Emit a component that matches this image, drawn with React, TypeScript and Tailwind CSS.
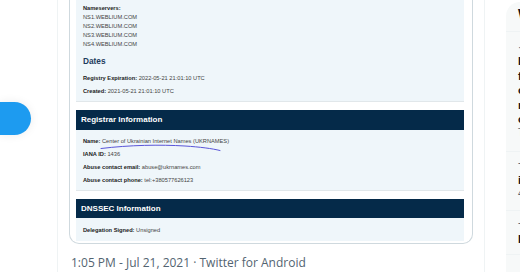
import React from 'react';

const Row: React.FC<{ label: string; value: string }> = ({ label, value }) => (
	<div className="leading-[13px]">
		<span className="font-bold text-[#1b1b1b]">{label}</span> <span className="text-[#444]">{value}</span>
	</div>
);

const Header: React.FC<{ title: string; h: string }> = ({ title, h }) => (
	<div className={`${h} bg-[#052a49] flex items-center pl-[5px] text-white font-bold text-[8px]`}>{title}</div>
);

const WhoisShot: React.FC = () => {
	return (
		<div className="relative font-['Liberation_Sans',Arial,sans-serif] text-[5.7px]">
			<div className="bg-[#eff6fa] border-b border-[#e1e7ea] pt-[3.5px] pb-[6px] pl-[7px] h-[102px]">
				<div className="leading-[9px]">
					<div className="font-bold text-[#1b1b1b]">Nameservers:</div>
					<div className="text-[#444]">NS1.WEBLIUM.COM</div>
					<div className="text-[#444]">NS2.WEBLIUM.COM</div>
					<div className="text-[#444]">NS3.WEBLIUM.COM</div>
					<div className="text-[#444]">NS4.WEBLIUM.COM</div>
				</div>
				<div className="mt-[6.5px] leading-[12px] text-[8.3px] font-bold text-[#1d3b5c]">Dates</div>
				<div className="mt-[4.5px]">
					<Row label="Registry Expiration:" value="2022-05-21 21:01:10 UTC" />
				</div>
				<Row label="Created:" value="2021-05-21 21:01:10 UTC" />
			</div>
			<div className="h-[8px]" />
			<Header title="Registrar Information" h="h-[20px]" />
			<div className="bg-[#eff6fa] border-b border-[#e1e7ea] pt-[4.5px] pl-[7px] h-[61px]">
				<Row label="Name:" value="Center of Ukrainian Internet Names (UKRNAMES)" />
				<Row label="IANA ID:" value="1436" />
				<Row label="Abuse contact email:" value="abuse@ukrnames.com" />
				<Row label="Abuse contact phone:" value="tel:+380577626123" />
			</div>
			<div className="h-[8px]" />
			<Header title="DNSSEC Information" h="h-[19px]" />
			<div className="bg-[#eff6fa] pt-[5.5px] pl-[7px] h-[23px]">
				<Row label="Delegation Signed:" value="Unsigned" />
			</div>
			<svg className="absolute left-[24px] top-[143px]" width="122" height="10" viewBox="0 0 122 10">
				<path d="M1 5.5 C 30 2, 60 1.5, 85 3 C 100 4, 112 5.5, 120 7.5" fill="none" stroke="#5a55d8" strokeWidth="1" strokeLinecap="round" />
			</svg>
		</div>
	);
};

const App: React.FC = () => {
	return (
		<div className="w-[520px] h-[272px] overflow-hidden bg-white flex">
			<div className="w-[58px] shrink-0 border-r border-[#eff3f4]">
				<div className="mt-[102px] h-[33px] w-[31px] rounded-r-full bg-[#1d9bf0] shadow-[0_0_10px_rgba(0,0,0,0.08)]" />
			</div>
			<div className="w-[427px] shrink-0 border-r border-[#eff3f4]">
				<div className="ml-[11px] w-[404px] border border-t-0 border-[#cfd9de] rounded-b-[10px] pl-[6px] pr-[8px] pb-[2px]">
					<WhoisShot />
				</div>
				<div className="ml-[13px] mt-[11px] leading-[16px] text-[12px] text-[#536471] font-['Open_Sans',sans-serif] whitespace-nowrap">
					1:05 PM - Jul 21, 2021 · Twitter for Android
				</div>
			</div>
			<div className="ml-[21px] mt-[2px] flex-1 bg-[#f7f9f9] rounded-tl-2xl overflow-hidden font-['Liberation_Sans',Arial,sans-serif] whitespace-nowrap">
				<div className="h-[30px] border-b border-[#eff3f4] pl-[12px] pt-[4px] leading-[16px] text-[14px] font-bold text-[#0f1419]">What's happening</div>
				<div className="h-[120px] border-b border-[#eff3f4] pl-[12px] pt-[10px]">
					<div className="leading-[12px] text-[10px] text-[#536471]">· Entertainment</div>
					<div className="leading-[14.5px] text-[11px] font-bold text-[#0f1419]">
						<div>Is this the final</div>
						<div>for the ...</div>
						<div>official</div>
						<div>record</div>
						<div>of the year</div>
					</div>
					<div className="leading-[12px] text-[10px] text-[#536471]">Trending</div>
				</div>
				<div className="h-[59px] border-b border-[#eff3f4] pl-[12px] pt-[5px]">
					<div className="leading-[12px] text-[10px] text-[#536471]">- Politics</div>
					<div className="mt-[3px] leading-[16px] text-[11px] font-bold text-[#0f1419]">i</div>
					<div className="leading-[12px] text-[10px] text-[#536471]">4,213 Tweets</div>
				</div>
				<div className="h-[44px] border-b border-[#eff3f4] pl-[12px] pt-[6px]">
					<div className="leading-[12px] text-[10px] text-[#536471]">- Trending</div>
					<div className="mt-[2px] leading-[16px] text-[11px] font-bold text-[#0f1419]">Ibiza</div>
				</div>
			</div>
		</div>
	);
};

export default App;
